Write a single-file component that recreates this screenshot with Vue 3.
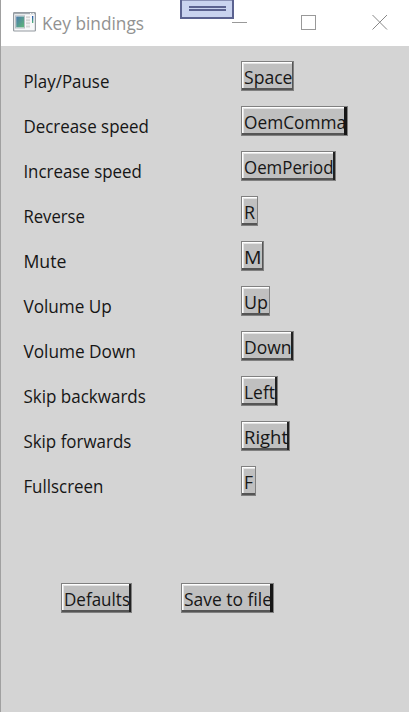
<script setup>
const bindings = [
  { label: 'Play/Pause', lw: 86, key: 'Space', w: 53, kw: 48.5, edge: 1 },
  { label: 'Decrease speed', lw: 125.5, key: 'OemComma', w: 107, kw: 102, edge: 3 },
  { label: 'Increase speed', lw: 118.5, key: 'OemPeriod', w: 95, kw: 89.5, edge: 2 },
  { label: 'Reverse', lw: 61.5, key: 'R', w: 17, kw: 11, edge: 0 },
  { label: 'Mute', lw: 43, key: 'M', w: 23, kw: 17.5, edge: 1 },
  { label: 'Volume Up', lw: 88.5, key: 'Up', w: 29, kw: 24, edge: 0 },
  { label: 'Volume Down', lw: 112.5, key: 'Down', w: 53, kw: 47.5, edge: 2 },
  { label: 'Skip backwards', lw: 122.5, key: 'Left', w: 37, kw: 31, edge: 2 },
  { label: 'Skip forwards', lw: 108, key: 'Right', w: 49, kw: 44, edge: 2 },
  { label: 'Fullscreen', lw: 80, key: 'F', w: 15, kw: 9, edge: 0 },
]
const actions = [
  { key: 'Defaults', w: 71, kw: 66, edge: 2 },
  { key: 'Save to file', w: 93, kw: 88, edge: 3 },
]
</script>

<template>
  <div class="window">
    <header class="titlebar">
      <svg class="app-icon" width="23" height="20" viewBox="0 0 23 20">
        <defs>
          <linearGradient id="pane" x1="0" y1="0" x2="1" y2="1">
            <stop offset="0" stop-color="#4a78ac" /><stop offset="1" stop-color="#5fb878" />
          </linearGradient>
          <linearGradient id="bar" x1="0" y1="0" x2="0" y2="1">
            <stop offset="0" stop-color="#2350b0" /><stop offset="1" stop-color="#55b878" />
          </linearGradient>
        </defs>
        <rect x=".6" y=".6" width="21.8" height="18.4" rx=".8" fill="#f8f9fa" stroke="#949aa0" stroke-width="1.2" />
        <path d="M1 1.5H22" stroke="#a4abb1" stroke-width="1.4" />
        <path d="M17 1.5h1.3M19.5 1.5h1.3" stroke="#fff" />
        <rect x="2.5" y="3.8" width="9" height="12.2" fill="#fff" stroke="#b8bec3" />
        <rect x="3.2" y="4.5" width="7.8" height="10.8" fill="url(#pane)" />
        <path d="M13 5.2h4M13 8.2h4M13 11.2h4M13 14.5h4" stroke="#d5d5d5" stroke-width="2" />
        <rect x="19" y="4" width="1.3" height="7" fill="url(#bar)" />
      </svg>
      <svg class="title" width="110" height="30">
        <text x="0" y="22" textLength="102" lengthAdjust="spacingAndGlyphs">Key bindings</text>
      </svg>
      <svg class="controls" width="156" height="16" viewBox="0 0 156 16" shape-rendering="crispEdges">
        <path d="M0 8.5H15M69.5 1.5H83.5V15.5H69.5Z" fill="none" stroke="#999" />
        <path d="M140.5 1L155 15.5M155 1L140.5 15.5" fill="none" stroke="#888" shape-rendering="auto" />
      </svg>
      <div class="handle"><i></i><i></i></div>
    </header>
    <main>
      <div v-for="b in bindings" :key="b.label" class="row">
        <svg class="label" width="218" height="30">
          <text x="0.4" y="27" :textLength="b.lw" lengthAdjust="spacingAndGlyphs">{{ b.label }}</text>
        </svg>
        <button :class="['key', 'edge-' + b.edge]" :style="{ width: b.w + 'px' }">
          <svg width="100%" height="30">
            <text x="3" y="22.5" :textLength="b.kw" lengthAdjust="spacingAndGlyphs">{{ b.key }}</text>
          </svg>
        </button>
      </div>
      <div class="actions">
        <button v-for="a in actions" :key="a.key" :class="['key', 'edge-' + a.edge]" :style="{ width: a.w + 'px' }">
          <svg width="100%" height="30">
            <text x="3" y="22.5" :textLength="a.kw" lengthAdjust="spacingAndGlyphs">{{ a.key }}</text>
          </svg>
        </button>
      </div>
    </main>
  </div>
</template>

<style>
body { margin: 0; overflow: hidden; }
</style>
<style scoped>
.window {
  box-sizing: border-box;
  width: 409px;
  height: 712px;
  border-left: 1px solid #a0a0a0;
  background: #d4d4d4;
  font-family: "Open Sans", "Noto Sans", sans-serif;
  font-size: 18px;
}
svg { display: block; flex: none; overflow: visible; }
.titlebar {
  position: relative;
  box-sizing: border-box;
  display: flex;
  align-items: flex-start;
  height: 46px;
  padding-left: 12px;
  background: #fff;
}
.app-icon { margin-top: 12px; }
.title { margin: 8px 0 0 6px; fill: #929292; font-size: 19px; }
.controls { margin: 14px 0 0 80px; }
.handle {
  position: absolute;
  left: 179px;
  top: 0;
  box-sizing: border-box;
  display: flex;
  flex-direction: column;
  align-items: center;
  gap: 1px;
  width: 54px;
  height: 19px;
  padding-top: 6px;
  border: 2px solid #5b6290;
  border-top-width: 0;
  background: #c9d3ef;
}
.handle::before { content: ""; position: absolute; left: 0; right: 0; top: 0; height: 1px; background: #8990b5; }
.handle i { width: 37px; height: 2px; background: #5b6290; }
main { padding: 15px 0 0 22px; }
.row { display: flex; height: 45px; }
text { white-space: pre; }
.label { fill: #161616; }
.key {
  box-sizing: border-box;
  flex: none;
  height: 30px;
  padding: 0;
  border: 0;
  background: #c0c0c0;
  color: #161616;
  font: inherit;
  box-shadow: inset 0 0 0 1px #808080, inset 0 -3px 0 #555, inset 2px 2px 0 #fff, inset 3px 3px 0 #e4e4e4;
}
.key svg { fill: #161616; }
.edge-1 { box-shadow: inset 0 0 0 1px #808080, inset -2px -3px 0 #555, inset 2px 2px 0 #fff, inset 3px 3px 0 #e4e4e4; }
.edge-2 { box-shadow: inset 0 0 0 1px #808080, inset -3px 0 0 #222, inset 0 -3px 0 #555, inset 2px 2px 0 #fff, inset 3px 3px 0 #e4e4e4; }
.edge-3 { box-shadow: inset 0 0 0 1px #808080, inset -4px 0 0 #161616, inset 0 -3px 0 #555, inset 2px 2px 0 #fff, inset 3px 3px 0 #e4e4e4; }
.actions { display: flex; gap: 49px; padding: 72px 0 0 38px; }
</style>
